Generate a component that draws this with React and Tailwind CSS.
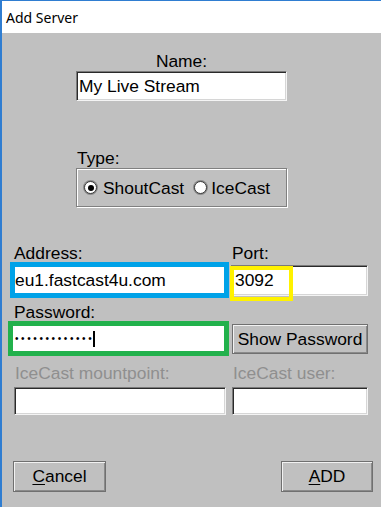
const sunken =
  "bg-white border border-t-[#7a7a7a] border-l-[#7a7a7a] border-b-[#f4f4f4] border-r-[#f4f4f4] shadow-[inset_1px_1px_0_#2a2a2a,inset_-1px_-1px_0_#d6d6d6]";

const raised =
  "bg-[#c0c0c0] border border-[#707070] shadow-[inset_1px_1px_0_#f2f2f2,inset_-1px_-1px_0_#8a8a8a]";

const Radio = ({ checked }) => (
  <span className="w-[13px] h-[13px] rounded-full bg-white border border-[#3a3a3a] shadow-[0_0_0_1px_#8a8a8a] flex items-center justify-center">
    {checked && <span className="w-[6px] h-[6px] rounded-full bg-black" />}
  </span>
);

export default function App() {
  return (
    <div className="w-[381px] h-[507px] flex flex-col border-l-2 border-t border-[#2f7dd1] font-['Liberation_Sans',Arial,sans-serif] text-[17.4px] text-black">
      {/* title bar */}
      <div className="h-[32px] bg-white flex items-center pl-[4px] font-['Noto_Sans',sans-serif] text-[14px]">
        Add Server
      </div>

      <div className="flex-1 bg-[#c0c0c0] flex flex-col">
        {/* name */}
        <div className="mt-[18px] ml-[74px] w-[211px]">
          <div className="leading-[20px] text-center">Name:</div>
          <div className={`${sunken} h-[30px] flex items-center pl-[2px]`}>My Live Stream</div>
        </div>

        {/* type */}
        <div className="mt-[47px] ml-[74px] w-[211px]">
          <div className="leading-[20px] pl-[1px]">Type:</div>
          <div className="h-[39px] border border-[#808080] shadow-[inset_1px_1px_0_#fff,1px_1px_0_#fff] flex items-center pl-[7px]">
            <Radio checked />
            <span className="ml-[6px] leading-[20px]">ShoutCast</span>
            <span className="ml-[10px]">
              <Radio />
            </span>
            <span className="ml-[4px] leading-[20px]">IceCast</span>
          </div>
        </div>

        {/* address / port */}
        <div className="mt-[37px] flex">
          <div className="ml-[8px] w-[219px]">
            <div className="leading-[18px] pl-[4px]">Address:</div>
            <div className="h-[36px] border-[5px] border-[#00a2e8] bg-white flex items-center">
              eu1.fastcast4u.com
            </div>
          </div>
          <div className="ml-[2px] w-[137px]">
            <div className="leading-[18px] pl-[1px]">Port:</div>
            <div className="relative h-[36px]">
              <div className={`${sunken} mt-[3px] h-[31px] flex items-center pl-[3px]`}>3092</div>
              <div className="absolute left-[-1px] top-[1px] w-[63px] h-[35px] border-4 border-[#fff200]" />
            </div>
          </div>
        </div>

        {/* password */}
        <div className="mt-[3px] flex">
          <div className="ml-[6px] w-[221px]">
            <div className="leading-[17px] pl-[6px]">Password:</div>
            <div className="h-[35px] border-[5px] border-[#22b14c] bg-white flex items-center pl-[2px]">
              <span className="text-[10px] tracking-[2.6px] leading-none">•••••••••••••</span>
              <span className="w-[2px] h-[16px] bg-black ml-[-1px]" />
            </div>
          </div>
          <div className="ml-[3px] w-[136px] pt-[20px]">
            <button className={`${raised} w-full h-[30px] flex items-center justify-center`}>
              Show Password
            </button>
          </div>
        </div>

        {/* icecast */}
        <div className="mt-[8px] flex text-[#8f8f8f]">
          <div className="ml-[12px] w-[212px]">
            <div className="leading-[18px] pl-[1px]">IceCast mountpoint:</div>
            <div className={`${sunken} mt-[5px] h-[28px]`} />
          </div>
          <div className="ml-[6px] w-[136px]">
            <div className="leading-[18px] pl-[1px]">IceCast user:</div>
            <div className={`${sunken} mt-[5px] h-[28px]`} />
          </div>
        </div>

        {/* buttons */}
        <div className="mt-[46px] flex justify-between">
          <button className={`${raised} ml-[11px] w-[93px] h-[31px] flex items-center justify-center`}>
            <span>
              <span className="underline underline-offset-2">C</span>ancel
            </span>
          </button>
          <button className={`${raised} mr-[8px] w-[92px] h-[31px] flex items-center justify-center`}>
            <span>
              <span className="underline underline-offset-2">A</span>DD
            </span>
          </button>
        </div>
      </div>
    </div>
  );
}
